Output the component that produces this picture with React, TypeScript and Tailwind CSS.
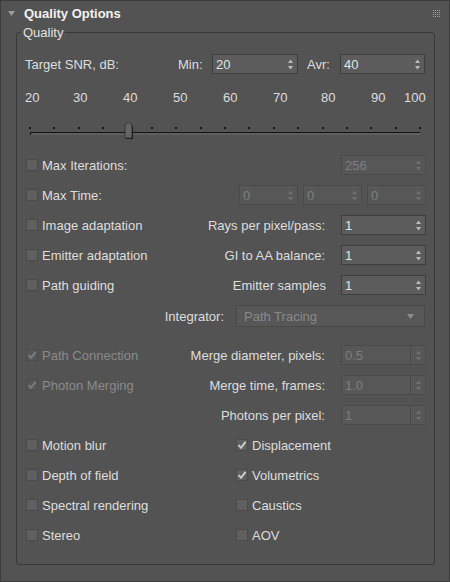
import React from 'react';

const Arrows = ({ dim }: { dim?: boolean }) => (
  <svg width="5" height="11" viewBox="0 0 5 11" className="shrink-0">
    <path d="M2.5 0.5L5 4H0Z" fill={dim ? '#727272' : '#bcbcbc'} />
    <path d="M0 7H5L2.5 10.5Z" fill={dim ? '#727272' : '#bcbcbc'} />
  </svg>
);

function Spinner({ value, w, dim, split }: { value: string; w: string; dim?: boolean; split?: boolean }) {
  return (
    <div
      className={`${w} h-[20px] flex items-center border pl-[3px] pr-[4px] ${
        dim ? 'border-[#4a4a4a] bg-[#575757] text-[#7e7e7e]' : 'border-[#3d3d3d] bg-[#5c5c5c] text-[#e2e2e2]'
      }`}
    >
      <span className="flex-1">{value}</span>
      {split && <span className="w-px h-full bg-[#4a4a4a] mr-[5px]" />}
      <Arrows dim={dim} />
    </div>
  );
}

function Check({ label, on, dim }: { label: string; on?: boolean; dim?: boolean }) {
  return (
    <div className="flex items-center">
      <span
        className={`ml-px w-[12px] h-[12px] border flex items-center justify-center ${
          dim ? 'border-[#4c4c4c] bg-[#565656]' : 'border-[#4a4a4a] bg-[#5f5f5f]'
        }`}
      >
        {on && (
          <svg width="10" height="10" viewBox="0 0 10 10">
            <path d="M1.5 5.2L4 7.8L8.6 1.8" fill="none" stroke={dim ? '#7c7c7c' : '#cfcfcf'} strokeWidth="1.9" />
          </svg>
        )}
      </span>
      <span className={`ml-[4px] ${dim ? 'text-[#8a8a8a]' : ''}`}>{label}</span>
    </div>
  );
}

const scale = [
  { t: '20', w: 'w-[48px]' },
  { t: '30', w: 'w-[50px]' },
  { t: '40', w: 'w-[50px]' },
  { t: '50', w: 'w-[50px]' },
  { t: '60', w: 'w-[50px]' },
  { t: '70', w: 'w-[48px]' },
  { t: '80', w: 'w-[50px]' },
  { t: '90', w: 'w-[33px]' },
  { t: '100', w: '' },
];

function Slider() {
  const dots = Array.from({ length: 17 }, (_, i) => 5 + i * 24.375);
  return (
    <svg width="400" height="35" viewBox="0 0 400 35" className="block">
      {dots.map((x, i) => (
        <rect key={i} x={Math.round(x) - 1} y="12" width="2" height="2" fill="#161616" />
      ))}
      <rect x="5" y="17" width="390" height="3" fill="#5f5f5f" />
      <rect x="5" y="17" width="390" height="1" fill="#141414" />
      <rect x="5" y="17" width="1" height="3" fill="#141414" />
      <path d="M101 11L104.5 8L108 11L108 24L101 24Z" fill="#141414" />
      <path d="M100 10L103.5 7L107 10L107 23L100 23Z" fill="#656565" stroke="#2c2c2c" strokeWidth="0.8" />
    </svg>
  );
}

export default function App() {
  return (
    <div className="w-[450px] h-[582px] bg-[#535353] border border-[#3c3c3c] text-[13px] leading-[15px] text-[#dedede] font-['Liberation_Sans',Arial,sans-serif]">
      <div className="h-[24px] flex items-center pl-[7px] pr-[9px]">
        <svg width="7" height="5" viewBox="0 0 7 5">
          <path d="M0 0H7L3.5 5Z" fill="#9c9c9c" />
        </svg>
        <span className="ml-[9px] font-bold text-[#f2f2f2]">Quality Options</span>
        <svg width="7" height="7" viewBox="0 0 7 7" className="ml-auto">
          {[0, 2, 4, 6].map((y) =>
            [0, 2, 4, 6].map((x) => <rect key={`${x}-${y}`} x={x} y={y} width="1" height="1" fill="#a2a2a2" />)
          )}
        </svg>
      </div>

      <fieldset className="ml-[15px] w-[419px] border border-[#393939] rounded-[3px] px-[8px] pb-[14px]">
        <legend className="-ml-[4px] px-[2px] text-[#e2e2e2]">Quality</legend>

        <div className="pt-[9px]">
          <div className="h-[30px] flex items-center">
            <span className="w-[153px]">Target SNR, dB:</span>
            <span className="w-[34px]">Min:</span>
            <Spinner value="20" w="w-[86px]" />
            <span className="ml-[9px] w-[33px]">Avr:</span>
            <Spinner value="40" w="w-[85px]" />
          </div>

          <div className="h-[36px] flex items-center">
            {scale.map((s) => (
              <span key={s.t} className={s.w}>
                {s.t}
              </span>
            ))}
          </div>

          <Slider />

          <div className="h-[30px] flex items-center">
            <Check label="Max Iterations:" />
            <div className="ml-auto">
              <Spinner value="256" w="w-[85px]" dim />
            </div>
          </div>
          <div className="h-[30px] flex items-center">
            <Check label="Max Time:" />
            <div className="ml-auto flex gap-[5px]">
              <Spinner value="0" w="w-[59px]" dim />
              <Spinner value="0" w="w-[59px]" dim />
              <Spinner value="0" w="w-[59px]" dim />
            </div>
          </div>
          <div className="h-[30px] flex items-center">
            <Check label="Image adaptation" />
            <span className="ml-auto mr-[16px]">Rays per pixel/pass:</span>
            <Spinner value="1" w="w-[85px]" />
          </div>
          <div className="h-[30px] flex items-center">
            <Check label="Emitter adaptation" />
            <span className="ml-auto mr-[16px]">GI to AA balance:</span>
            <Spinner value="1" w="w-[85px]" />
          </div>
          <div className="h-[30px] flex items-center">
            <Check label="Path guiding" />
            <span className="ml-auto mr-[15px]">Emitter samples</span>
            <Spinner value="1" w="w-[85px]" />
          </div>

          <div className="h-[32px] flex items-center justify-end">
            <span className="mr-[12px]">Integrator:</span>
            <div className="w-[189px] h-[22px] mr-px flex items-center border border-[#484848] bg-[#575757] pl-[7px] pr-[10px] text-[#8a8a8a]">
              <span className="flex-1">Path Tracing</span>
              <svg width="7" height="5" viewBox="0 0 7 5">
                <path d="M0 0H7L3.5 5Z" fill="#8c8c8c" />
              </svg>
            </div>
          </div>

          <div className="mt-[8px]">
            <div className="h-[30px] flex items-center">
              <Check label="Path Connection" on dim />
              <span className="ml-auto mr-[16px]">Merge diameter, pixels:</span>
              <Spinner value="0.5" w="w-[85px]" dim split />
            </div>
            <div className="h-[30px] flex items-center">
              <Check label="Photon Merging" on dim />
              <span className="ml-auto mr-[16px]">Merge time, frames:</span>
              <Spinner value="1.0" w="w-[85px]" dim split />
            </div>
            <div className="h-[30px] flex items-center justify-end">
              <span className="mr-[16px]">Photons per pixel:</span>
              <Spinner value="1" w="w-[85px]" dim split />
            </div>
          </div>

          <div className="grid grid-cols-[210px_1fr] auto-rows-[30px] items-center">
            <Check label="Motion blur" />
            <Check label="Displacement" on />
            <Check label="Depth of field" />
            <Check label="Volumetrics" on />
            <Check label="Spectral rendering" />
            <Check label="Caustics" />
            <Check label="Stereo" />
            <Check label="AOV" />
          </div>
        </div>
      </fieldset>
    </div>
  );
}
